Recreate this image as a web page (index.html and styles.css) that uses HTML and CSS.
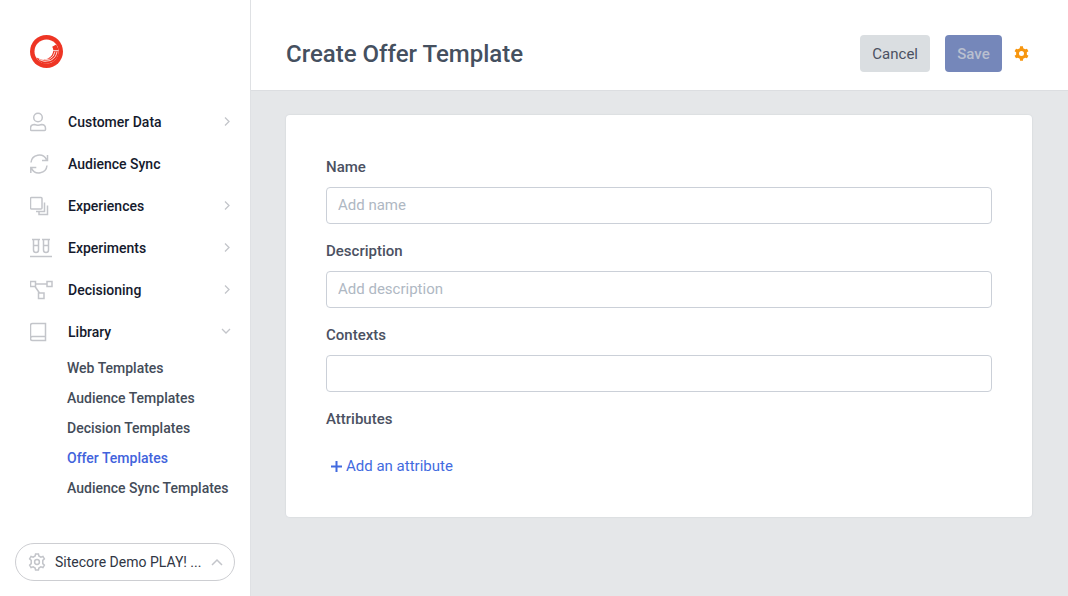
FILE: index.html
```html
<!DOCTYPE html>
<html lang="en">
<head>
<meta charset="utf-8">
<meta name="viewport" content="width=device-width, initial-scale=1">
<title>Create Offer Template</title>
<link rel="stylesheet" href="styles.css">
</head>
<body>
<div class="app">
  <aside class="sidebar">
    <a class="logo" href="#" aria-label="Sitecore">
      <svg width="33" height="33" viewBox="0 0 33 33">
        <circle cx="16.500" cy="16.500" r="16.500" fill="#ee3524"/>
        <circle cx="16.500" cy="16.500" r="12" fill="#fff"/>
        <path d="M22.200 11.800l4-2.400q2.300 3.500 2.300 7.100a12 12 0 0 1-20.500 8.500l-1.500-2.500q5.500 3.300 11 1.200 6.300-3.300 5.700-9.500-.3-1.300-1-2.400z" fill="#ee3524"/>
        <path d="M27 16.500q-.6 6-6.500 9-6.500 2.300-11.500-1M25 16.500q-.8 5.300-5.500 7.600-5 1.600-9.500-.3M23 15.600h5.500" fill="none" stroke="#fff" stroke-width=".8"/>
      </svg>
    </a>
    <nav class="nav">
      <a class="nav-item" href="#">
        <svg class="nav-icon" viewBox="0 0 24 20"><circle cx="8" cy="5.500" r="4.300"/><path d="M4.500 12.500q3.500 1.500 7 0 4 0 4 4v1q0 1-1 1h-13q-1 0-1-1v-1q0-4 4-4z"/></svg>
        <span class="nav-label">Customer Data</span>
        <svg class="chevron" viewBox="0 0 10 10"><path d="M3 .5l4 4-4 4"/></svg>
      </a>
      <a class="nav-item" href="#">
        <svg class="nav-icon" viewBox="0 0 24 20"><path d="M1 8.500a8.200 8.200 0 0 1 15.500-2.800M17.500 1v5.500h-5.500M17 11.500a8.200 8.200 0 0 1-15.500 2.800M.8 19v-5.500h5.500"/></svg>
        <span class="nav-label">Audience Sync</span>
      </a>
      <a class="nav-item" href="#">
        <svg class="nav-icon" viewBox="0 0 24 20"><path d="M1.500 1.500h9.500q1 0 1 1v9.500q0 1-1 1h-9.500q-1 0-1-1v-9.500q0-1 1-1zM14.500 6.500v9h-8.500M17.500 9.500v9h-8.500v-2.500"/></svg>
        <span class="nav-label">Experiences</span>
        <svg class="chevron" viewBox="0 0 10 10"><path d="M3 .5l4 4-4 4"/></svg>
      </a>
      <a class="nav-item" href="#">
        <svg class="nav-icon" viewBox="0 0 24 20"><path d="M2 1.500h8M12 1.500h8M3.500 1.500v10.500q0 2.500 2.500 2.500t2.500-2.500v-10.500M13.500 1.500v10.500q0 2.500 2.500 2.500t2.500-2.500v-10.500M3.500 7.500h5M13.500 7.500h5M0 18.500h22"/></svg>
        <span class="nav-label">Experiments</span>
        <svg class="chevron" viewBox="0 0 10 10"><path d="M3 .5l4 4-4 4"/></svg>
      </a>
      <a class="nav-item" href="#">
        <svg class="nav-icon" viewBox="0 0 24 20"><path d="M.5 1.500h5v5h-5zM17 1.500h5v5h-5zM8.500 13h5.500v5.500h-5.500zM5.500 4h11.500M5 6.500l4.500 6.500"/></svg>
        <span class="nav-label">Decisioning</span>
        <svg class="chevron" viewBox="0 0 10 10"><path d="M3 .5l4 4-4 4"/></svg>
      </a>
      <a class="nav-item" href="#">
        <svg class="nav-icon" viewBox="0 0 24 20"><path d="M2.500 1.500h13v17h-13q-2 0-2-2v-13q0-2 2-2zM15.500 14.500h-13q-2 0-2 2"/></svg>
        <span class="nav-label">Library</span>
        <svg class="chevron chevron-down" viewBox="0 0 10 10"><path d="M1 2l4 4 4-4"/></svg>
      </a>
      <div class="subnav">
        <a class="subnav-item" href="#">Web Templates</a>
        <a class="subnav-item" href="#">Audience Templates</a>
        <a class="subnav-item" href="#">Decision Templates</a>
        <a class="subnav-item active" href="#">Offer Templates</a>
        <a class="subnav-item" href="#">Audience Sync Templates</a>
      </div>
    </nav>
    <button class="account" type="button">
      <svg class="account-gear" viewBox="0 0 24 24"><path d="M9.500 4l.6-2.800h3.800l.6 2.800 2.600 1.500 2.800-.9 1.900 3.300-2.100 1.900v4.400l2.100 1.900-1.900 3.300-2.800-.9-2.600 1.500-.6 2.800h-3.800l-.6-2.800-2.600-1.500-2.800.9-1.900-3.300 2.100-1.900v-4.400l-2.100-1.900 1.900-3.300 2.800.9z"/><circle cx="12" cy="12" r="3.200"/></svg>
      <span class="account-name">Sitecore Demo PLAY! ...</span>
      <svg class="account-arrow" viewBox="0 0 12 10"><path d="M1 8l5-5 5 5"/></svg>
    </button>
  </aside>
  <main class="main">
    <header class="header">
      <h1 class="title">Create Offer Template</h1>
      <div class="actions">
        <button class="btn btn-cancel" type="button">Cancel</button>
        <button class="btn btn-save" type="button" disabled>Save</button>
        <button class="settings" type="button" aria-label="Settings">
          <svg width="15" height="15" viewBox="1.500 1.500 21 21"><path fill="#f7960f" fill-rule="evenodd" d="M9.600 4.700L10 2h4l.4 2.700 2.700 1.500 2.600-1 2 3.500-2.200 1.700v3.200l2.200 1.700-2 3.500-2.600-1-2.700 1.500L14 22h-4l-.4-2.700-2.700-1.500-2.600 1-2-3.500 2.200-1.700v-3.200L2.300 8.700l2-3.500 2.600 1zM12 8.500a3.500 3.500 0 1 0 0 7 3.500 3.500 0 0 0 0-7z"/></svg>
        </button>
      </div>
    </header>
    <form class="card">
      <div class="field">
        <label class="label" for="name">Name</label>
        <input class="input" id="name" type="text" placeholder="Add name">
      </div>
      <div class="field">
        <label class="label" for="description">Description</label>
        <input class="input" id="description" type="text" placeholder="Add description">
      </div>
      <div class="field">
        <label class="label" for="contexts">Contexts</label>
        <input class="input" id="contexts" type="text">
      </div>
      <h2 class="label">Attributes</h2>
      <button class="add" type="button">
        <svg width="11" height="11" viewBox="0 0 11 11"><path d="M5.500 0v11M0 5.500h11" stroke="currentColor" stroke-width="2"/></svg>
        Add an attribute
      </button>
    </form>
  </main>
</div>
</body>
</html>
```

FILE: styles.css
```css
* {
  box-sizing: border-box;
}

body {
  margin: 0;
  font-family: Roboto, "Liberation Sans", sans-serif;
  font-size: 15px;
  line-height: 24px;
  color: #4b5162;
  background: #e5e7e9;
}

a {
  color: inherit;
  text-decoration: none;
}

button,
input {
  font: inherit;
}

button {
  cursor: pointer;
}

.app {
  display: flex;
  min-height: 100vh;
}

.sidebar {
  display: flex;
  flex-direction: column;
  flex: 0 0 251px;
  min-width: 0;
  padding: 35px 15px 15px;
  background: #fff;
  border-right: 1px solid #dfe1e4;
}

.logo {
  display: flex;
  margin: 0 0 33px 15px;
}

.nav {
  flex: 1;
  font-size: 14px;
  font-weight: 500;
}

.nav-item {
  display: flex;
  align-items: center;
  height: 42px;
  padding: 0 3px 0 15px;
  color: #151a2d;
}

.nav-icon {
  width: 24px;
  height: 20px;
  margin-right: 14px;
}

.nav-icon,
.chevron,
.account-gear,
.account-arrow {
  flex: none;
  fill: none;
  stroke: #c3c5ca;
  stroke-width: 1.5;
}

.nav-label {
  flex: 1;
}

.chevron {
  width: 10px;
  height: 10px;
  stroke-width: 1.3;
}

.chevron-down {
  margin-right: 1px;
}

.subnav {
  padding-left: 52px;
}

.subnav-item {
  display: block;
  line-height: 30px;
  color: #444c59;
}

.subnav-item.active {
  color: #4263dc;
}

.account {
  display: flex;
  align-items: center;
  gap: 9px;
  height: 38px;
  padding: 0 11px 0 12px;
  font-size: 14px;
  color: #303644;
  background: #fff;
  border: 1px solid #cdced2;
  border-radius: 19px;
}

.account-gear {
  width: 18px;
  height: 18px;
  stroke-width: 2;
}

.account-name {
  white-space: nowrap;
}

.account-arrow {
  width: 12px;
  height: 10px;
  margin-left: auto;
}

.main {
  flex: 1;
  min-width: 0;
}

.header {
  display: flex;
  align-items: center;
  justify-content: space-between;
  padding: 35px 39px 18px 35px;
  background: #fff;
  border-bottom: 1px solid #dcdee1;
}

.title {
  margin: 0;
  font-size: 24px;
  font-weight: 500;
  line-height: 36px;
  color: #45505f;
}

.actions {
  display: flex;
  align-items: center;
}

.btn {
  height: 37px;
  padding: 0 12px;
  border: 0;
  border-radius: 4px;
}

.btn-cancel {
  margin-right: 15px;
  color: #4b5162;
  background: #dadee1;
}

.btn-save {
  margin-right: 12px;
  min-width: 57px;
  font-weight: 500;
  color: #b9bfcf;
  background: #7587ba;
}

.settings {
  display: flex;
  padding: 0;
  background: none;
  border: 0;
}

.card {
  margin: 24px 36px 24px 35px;
  padding: 40px 40px 39px;
  background: #fff;
  border-radius: 4px;
  box-shadow: 0 0 1px 1px #dcdfe2;
}

.field {
  margin-bottom: 15px;
}

.label {
  display: block;
  margin: 0 0 8px;
  font-size: 15px;
  font-weight: 500;
  line-height: 24px;
}

.input {
  display: block;
  width: 100%;
  height: 37px;
  padding: 0 11px 2px;
  color: #4b5162;
  background: #fff;
  border: 1px solid #cbd0d8;
  border-radius: 4px;
}

.input::placeholder {
  color: #afb8c3;
}

.add {
  display: flex;
  align-items: center;
  gap: 4px;
  margin-top: 23px;
  padding: 0 5px;
  color: #426bdf;
  background: none;
  border: 0;
}
```
